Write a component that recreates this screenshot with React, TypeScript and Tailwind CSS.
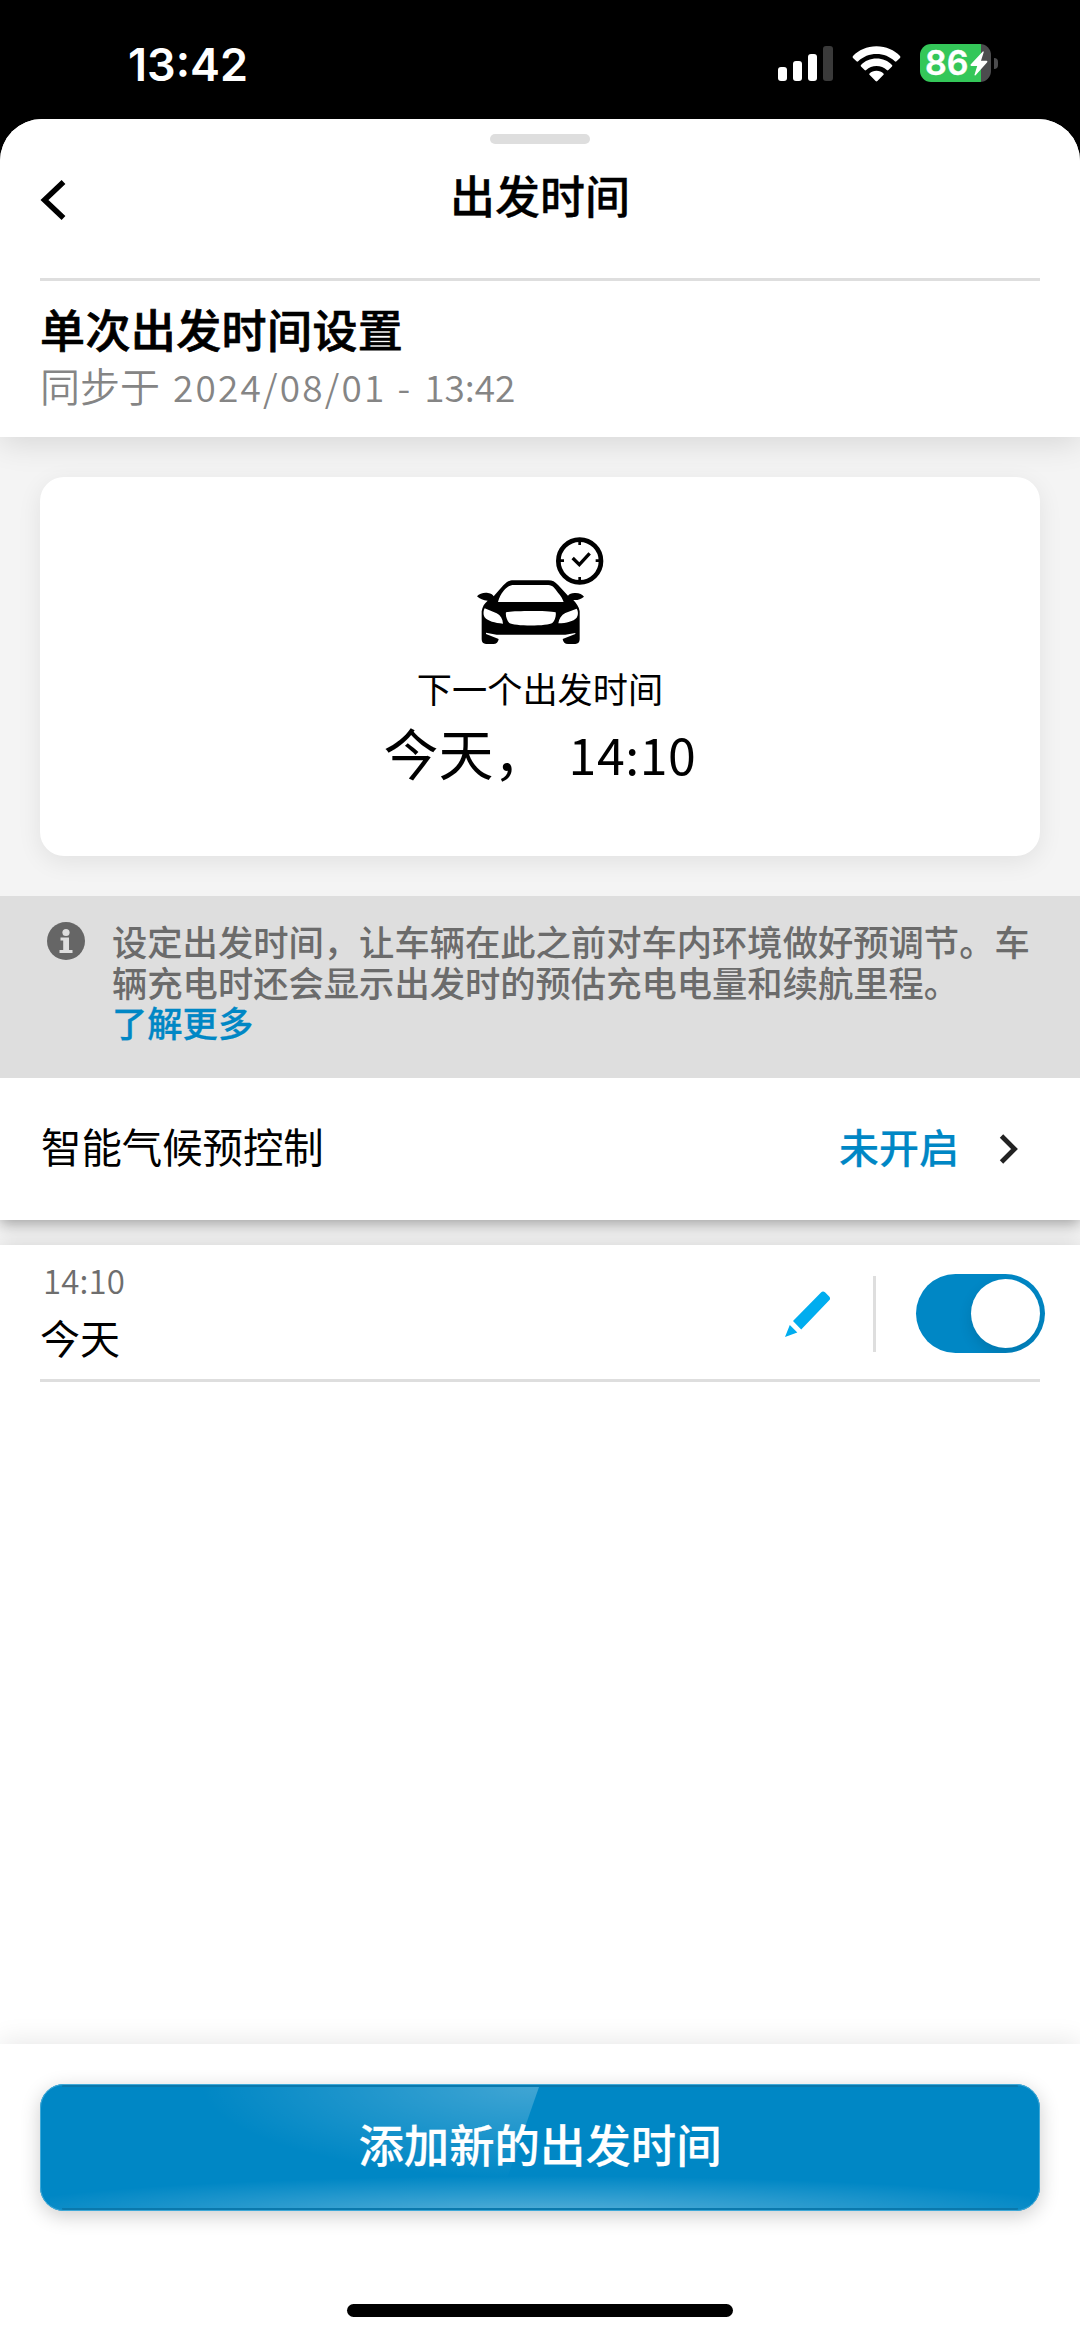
import type { ReactNode } from "react";

function StatusBar() {
  return (
    <div className="flex h-[119px] items-start pl-[128px] pr-[82px] font-['Inter','Liberation_Sans',sans-serif] text-white">
      <div className="mt-[38px] text-[45px] leading-[54px] font-semibold">13:42</div>
      <div className="mt-[44px] ml-auto flex">
        <div className="mt-[2px] flex h-[35px] items-end gap-[6px]">
          <span className="h-[14px] w-[9px] rounded-[3px] bg-white" />
          <span className="h-[20px] w-[9px] rounded-[3px] bg-white" />
          <span className="h-[27px] w-[9px] rounded-[3px] bg-white" />
          <span className="h-[35px] w-[10px] rounded-[3px] bg-[#3a3a3a]" />
        </div>
        <svg className="mt-[1px] ml-[19px] h-[37px] w-[49px]" viewBox="0 0 49 37" fill="#fff">
          <path d="M24.500 1.200C34.200 1.200 42.300 5 48 10.900Q48.900 11.900 48 12.900L44.500 16.300Q43.700 17 42.800 16.200C37.900 11.400 31.500 8.900 24.500 8.900S11.100 11.400 6.200 16.200Q5.300 17 4.500 16.300L1 12.900Q.1 11.900 1 10.900C6.700 5 14.800 1.200 24.500 1.200Z" />
          <path d="M24.500 13.600C30.700 13.600 36 16 40 20Q40.700 20.800 40 21.600L36.400 25.100Q35.600 25.800 34.800 25.100C32 22.600 28.500 21.100 24.500 21.100S17 22.600 14.200 25.100Q13.400 25.800 12.600 25.100L9 21.600Q8.300 20.800 9 20C13 16 18.300 13.600 24.500 13.600Z" />
          <path d="M24.500 25.800C27.300 25.800 29.600 26.800 31.500 28.400Q32.200 29.100 31.500 29.800L25.400 36Q24.500 36.800 23.600 36L17.500 29.800Q16.800 29.100 17.500 28.400C19.400 26.800 21.700 25.800 24.500 25.800Z" />
        </svg>
        <div className="relative ml-[19px] flex h-[38px] w-[71px] items-center rounded-[11px] bg-[linear-gradient(90deg,#34c759_61px,#4c4c4e_61px)] pl-[5px]">
          <span className="text-[34px] leading-[38px] font-semibold [-webkit-text-stroke:0.4px]">86</span>
          <svg className="absolute top-[7px] left-[50px] h-[25px] w-[18px]" viewBox="0 0 18 25" fill="#fff">
            <path d="M12.800 0.400 0.600 13.600Q0 15 1.400 15H7.200L4.500 23.800Q4.600 25 5.600 24.200L17.200 11.200Q17.900 9.800 16.600 9.700H11L13.700 1.200Q13.700 .1 12.800 .4Z" />
          </svg>
        </div>
        <span className="mt-[14px] ml-[3px] h-[11px] w-[4px] rounded-r-full bg-[#4c4c4e]" />
      </div>
    </div>
  );
}

function CarClockIcon() {
  return (
    <svg className="h-[110px] w-[130px]" viewBox="405 105 390 330" fill="none">
      <circle cx="719" cy="183" r="64" stroke="#000" strokeWidth="14" />
      <path d="M719 122v13M719 231v13M658 182h14M767 182h14" stroke="#000" strokeWidth="8" />
      <path d="M698 174l20 20 31-34" stroke="#000" strokeWidth="10" />
      <path
        fill="#000"
        fillRule="evenodd"
        d="M411 289C418 281 431 277 444 279C454 280 459 284 461 289L490 256C500 245 508 241 520 241H625C637 241 645 245 655 256L684 287C688 282 694 279 704 279C716 278 727 283 732 290C722 298 713 301 700 300C709 310 717 320 719 334V418C719 427 714 432 706 432H684C675 432 669 426 668 417L706 402V399L676 404H470L438 398V402L476 417C475 426 469 432 460 432H438C430 432 425 427 425 418V334C427 320 433 310 443 302C430 301 419 297 411 289ZM474 306H671C668 296 662 287 654 278C645 266 638 255 625 255H522C509 255 500 262 491 272C483 281 477 294 474 306ZM498 337C496 347 501 361 508 369C520 379 625 379 637 369C645 361 649 347 647 337C625 332 520 332 498 337ZM434 325C430 332 429 345 434 352C444 364 464 369 489 371C488 357 482 346 470 340ZM710 326L676 339C664 345 657 356 655 370C680 369 700 364 710 353C715 345 715 333 710 326Z"
      />
    </svg>
  );
}

function PencilIcon() {
  return (
    <svg className="h-[46px] w-[46px]" viewBox="0 0 46 46" fill="#00adef">
      <path d="M8 30 36 1.500Q37.800 -.4 40 1.200L44.200 5.400Q46 7.400 44.200 9.300L16.200 38.500Z" />
      <path d="M4.800 34 12.300 41.500 0 46Z" />
    </svg>
  );
}

function Toggle() {
  return (
    <button
      aria-label="今天 14:10"
      className="flex h-[79px] w-[129px] items-center justify-end overflow-hidden rounded-full bg-[#0087c5] pr-[5px]"
    >
      <span className="size-[69px] rounded-full bg-white shadow-[0_6px_14px_rgba(0,0,0,0.12)]" />
    </button>
  );
}

function Digits({ className, children }: { className: string; children: ReactNode }) {
  return <span className={className}>{children}</span>;
}

export default function App() {
  return (
    <div className="h-[2337px] w-[1080px] overflow-hidden bg-black font-['Noto_Sans_CJK_SC',sans-serif] text-black">
      <StatusBar />
      <div className="flex h-[2218px] flex-col overflow-hidden rounded-t-[42px] bg-[#f4f4f4]">
        <header className="relative h-[318px] shrink-0 bg-white px-10 pt-[15px] shadow-[0_6px_30px_rgba(0,0,0,0.12)]">
          <div className="mx-auto h-[10px] w-[100px] rounded-full bg-[#dedede]" />
          <div className="mb-[33px] grid h-[101px] grid-cols-[1fr_auto_1fr] items-center">
            <svg className="mt-[10px] h-10 w-[26px]" viewBox="0 0 26 40" fill="none" stroke="#000" strokeWidth="5.500">
              <path d="M23.500 2 4.500 20l19 18" />
            </svg>
            <h1 className="text-[45px] leading-[54px] font-medium [-webkit-text-stroke:0.3px]">出发时间</h1>
          </div>
          <div className="h-[3px] bg-[#dedede]" />
          <h2 className="mt-[21px] text-[45px] leading-[54px] font-medium tracking-[0.4px] [-webkit-text-stroke:0.7px]">
            单次出发时间设置
          </h2>
          <p className="mt-[7px] flex items-baseline text-[40px] leading-[44px] font-[350] text-[#858585]">
            同步于
            <Digits className="ml-[13px] text-[37px] tracking-[2.2px]">2024/08/01</Digits>
            <Digits className="ml-[11px] text-[37px]">-</Digits>
            <Digits className="ml-[14px] text-[37px]">13:42</Digits>
          </p>
        </header>

        <section className="h-[459px] shrink-0 px-10 pt-10">
          <div className="relative flex h-[379px] flex-col items-center rounded-[24px] bg-white pt-[58px] shadow-[0_6px_24px_rgba(0,0,0,0.08)]">
            <CarClockIcon />
            <div className="mt-[23px] text-[35.2px] leading-10">下一个出发时间</div>
            <div className="mt-[13px] flex items-baseline text-[55px] leading-[60px]">
              今天，
              <Digits className="ml-[20px] text-[50px] tracking-[0.6px]">14:10</Digits>
            </div>
          </div>
        </section>

        <section className="relative z-10 flex h-[182px] shrink-0 items-start bg-[#dedede] pt-[25px] pl-[47px]">
          <svg className="mt-[1px] size-[38px] shrink-0" viewBox="0 0 38 38">
            <circle cx="19" cy="19" r="19" fill="#666" />
            <circle cx="19" cy="10.500" r="3.600" fill="#dedede" />
            <path d="M13.500 15.500H22V28H25.500V31H12.500V28H16.200V18.500H13.500Z" fill="#dedede" />
          </svg>
          <p className="ml-[27px] text-[35.300px] leading-[40.500px] font-medium whitespace-nowrap text-[#6b6b6b]">
            设定出发时间，让车辆在此之前对车内环境做好预调节。车
            <br />
            辆充电时还会显示出发时的预估充电电量和续航里程。
            <br />
            <a className="text-[#0087c5] [-webkit-text-stroke:0.3px]">了解更多</a>
          </p>
        </section>

        <section className="relative flex h-[142px] shrink-0 items-center bg-white pr-[62px] pl-[41px] shadow-[0_4px_14px_rgba(0,0,0,0.35)]">
          <span className="-mt-[7px] text-[40.400px] leading-[48px]">智能气候预控制</span>
          <span className="-mt-[7px] ml-auto text-[40px] leading-[48px] font-medium text-[#0087c5] [-webkit-text-stroke:0.2px]">
            未开启
          </span>
          <svg className="ml-[40px] h-[30px] w-[19px]" viewBox="0 0 19 30" fill="none" stroke="#222" strokeWidth="4.800">
            <path d="M2.500 2 15.500 15l-13 13" />
          </svg>
        </section>

        <main className="relative mt-[25px] grow bg-white shadow-[0_-2px_20px_rgba(0,0,0,0.12)]">
          <div className="flex h-[134px] items-center pr-[35px] pl-10">
            <div className="h-[104px]">
              <div className="pl-[3px] text-[33px] leading-10 font-[350] tracking-[0.1px] text-[#6e6e6e]">14:10</div>
              <div className="mt-[13px] text-[40px] leading-[48px]">今天</div>
            </div>
            <div className="mt-[3px] ml-auto flex items-center">
              <PencilIcon />
              <div className="mr-[40px] ml-[42px] h-[76px] w-[3px] bg-[#dedede]" />
              <Toggle />
            </div>
          </div>
          <div className="mx-10 h-[3px] bg-[#dedede]" />
        </main>

        <footer className="relative h-[293px] shrink-0 bg-white px-10 pt-10 shadow-[0_-4px_24px_rgba(0,0,0,0.09)]">
          <button className="relative block h-[127px] w-full rounded-[24px] bg-[#0087c5] shadow-[0_5px_20px_rgba(0,0,0,0.2)]">
            <svg className="absolute inset-0 h-[127px] w-[1000px]" viewBox="0 0 1000 127" fill="none">
              <defs>
                <radialGradient id="topShine" cx="0" cy="0" r="1" gradientUnits="userSpaceOnUse" gradientTransform="translate(500 0) scale(340 95)">
                  <stop stopColor="#fff" stopOpacity=".26" />
                  <stop offset=".5" stopColor="#fff" stopOpacity=".13" />
                  <stop offset="1" stopColor="#fff" stopOpacity="0" />
                </radialGradient>
                <radialGradient id="bottomShine" cx="0" cy="0" r="1" gradientUnits="userSpaceOnUse" gradientTransform="translate(500 130) scale(560 38)">
                  <stop stopColor="#fff" stopOpacity=".34" />
                  <stop offset="1" stopColor="#fff" stopOpacity="0" />
                </radialGradient>
              </defs>
              <path d="M60 3H499L456 126H60Z" fill="url(#topShine)" />
              <path d="M10 85H990V125H10Z" fill="url(#bottomShine)" />
              <path d="M22 2H978M22 125H978" stroke="#0a78ac" strokeWidth="2" />
              <rect x=".5" y=".5" width="999" height="126" rx="23.500" stroke="#3fa9d8" />
            </svg>
            <span className="relative -top-[5px] text-[45.400px] leading-[54px] font-medium text-white [-webkit-text-stroke:0.2px]">
              添加新的出发时间
            </span>
          </button>
          <div className="mx-auto mt-[93px] h-[13px] w-[386px] rounded-full bg-black" />
        </footer>
      </div>
    </div>
  );
}
